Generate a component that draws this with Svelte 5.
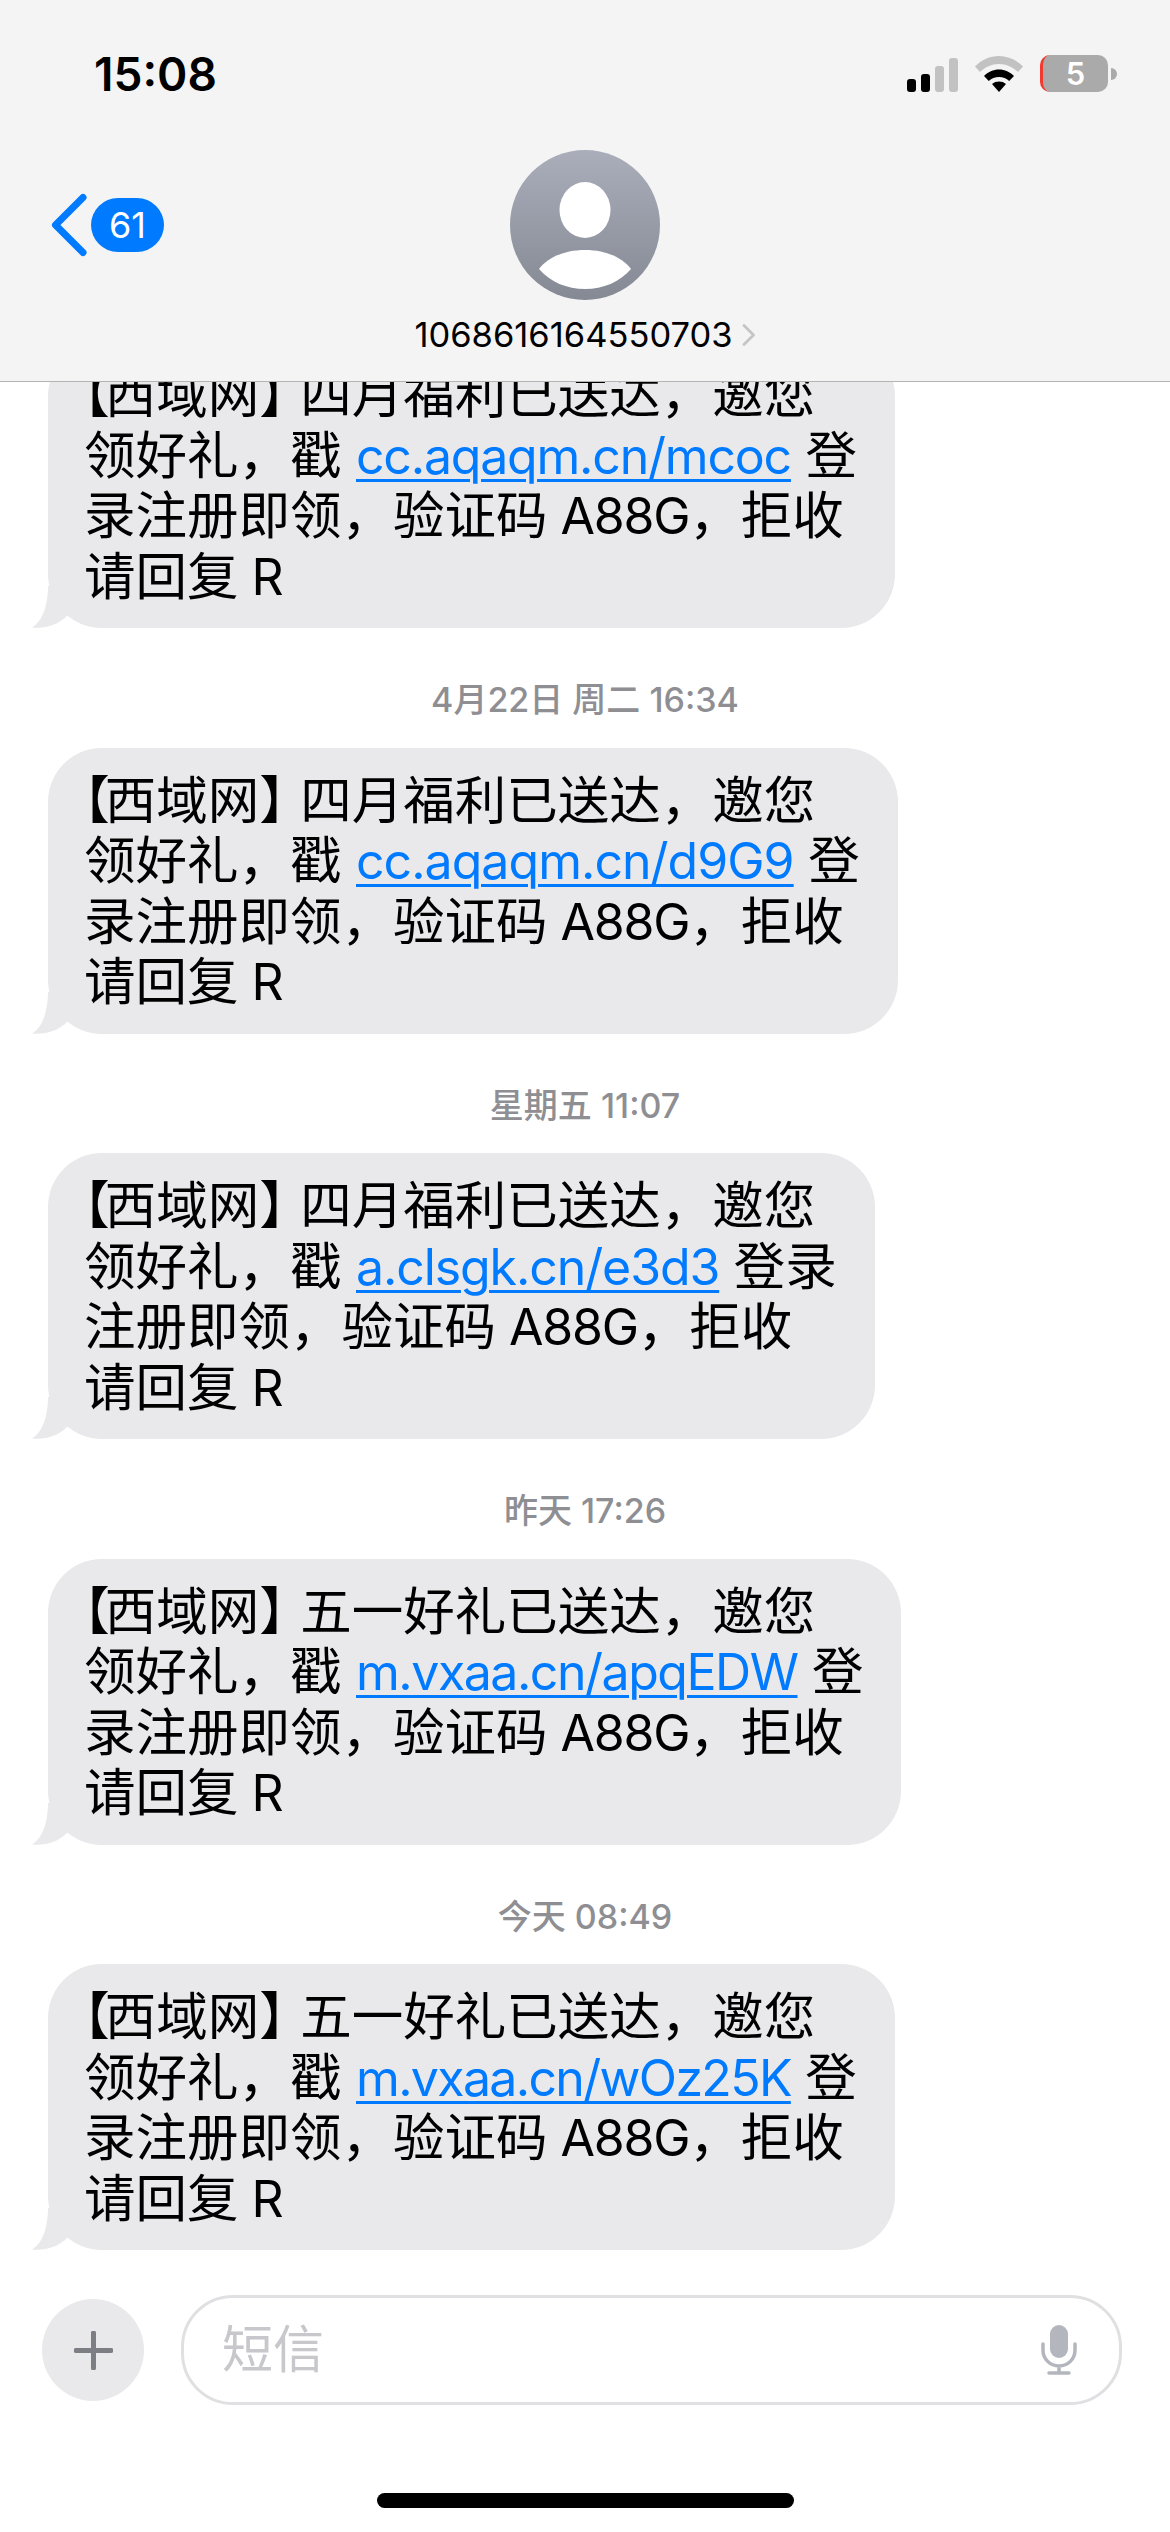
<script>
  const messages = [
    { ts: null, head: '四月福利已送达', link: 'cc.aqaqm.cn/mcoc', track: -1.2, l2: '登', l3: '录注册即领，验证码' },
    { ts: '4月22日 周二 16:34', head: '四月福利已送达', link: 'cc.aqaqm.cn/d9G9', track: -0.97, l2: '登', l3: '录注册即领，验证码' },
    { ts: '星期五 11:07', head: '四月福利已送达', link: 'a.clsgk.cn/e3d3', track: -1.1, l2: '登录', l3: '注册即领，验证码' },
    { ts: '昨天 17:26', head: '五一好礼已送达', link: 'm.vxaa.cn/apqEDW', track: -1.47, l2: '登', l3: '录注册即领，验证码' },
    { ts: '今天 08:49', head: '五一好礼已送达', link: 'm.vxaa.cn/wOz25K', track: -1.67, l2: '登', l3: '录注册即领，验证码' }
  ];
</script>

<div class="screen">
  <header class="top">
    <div class="status">
      <span class="time">15:08</span>
      <div class="indicators">
        <svg class="signal" width="51" height="34" viewBox="0 0 51 34">
          <rect x="0" y="21" width="9" height="13" rx="3" fill="#000" />
          <rect x="14" y="16" width="9" height="18" rx="3" fill="#000" />
          <rect x="28" y="8" width="9" height="26" rx="3" fill="#c2c2c2" />
          <rect x="42" y="0" width="9" height="34" rx="3" fill="#c2c2c2" />
        </svg>
        <svg class="wifi" width="48" height="36" viewBox="0 0 48 36">
          <path d="M0 10.5C6.5 4 14.8 0 24 0s17.500 4 24 10.500l-5 5.500C37.800 11 31.300 8 24 8S10.200 11 5 16z" fill="#c2c2c2" />
          <path d="M9 20C13 16 18.200 13.500 24 13.500S35 16 39 20l-4.800 5C31.500 22.500 28 21 24 21s-7.500 1.500-10.200 4z" fill="#000" />
          <path d="M17 28C19 26.300 21.400 25.500 24 25.500s5 .8 7 2.500l-7 8z" fill="#000" />
        </svg>
        <div class="battery">
          <div class="cell"><span>5</span></div>
          <div class="nub"></div>
        </div>
      </div>
    </div>
    <div class="nav">
      <div class="back">
        <svg width="38" height="64" viewBox="0 0 38 64">
          <path d="M33 4.500 5.500 32 33 59.500" fill="none" stroke="#007aff" stroke-width="7" stroke-linecap="round" stroke-linejoin="round" />
        </svg>
        <span class="badge">61</span>
      </div>
      <div class="contact">
        <svg class="avatar" width="150" height="150" viewBox="0 0 150 150">
          <defs>
            <linearGradient id="av" x1="0" y1="0" x2="0" y2="1">
              <stop offset="0" stop-color="#a9aeba" />
              <stop offset="1" stop-color="#858994" />
            </linearGradient>
          </defs>
          <circle cx="75" cy="75" r="75" fill="url(#av)" />
          <ellipse cx="75" cy="60" rx="25.500" ry="28" fill="#fff" />
          <path d="M29 119C38 107 55 100 75 100s37 7 46 19c-11 13-28 20-46 20s-35-7-46-20z" fill="#fff" />
        </svg>
        <div class="number">
          <span>1068616164550703</span>
          <svg width="14" height="22" viewBox="0 0 14 22">
            <path d="M2 1.500 11.500 11 2 20.500" fill="none" stroke="#c5c5c7" stroke-width="2.800" stroke-linecap="round" stroke-linejoin="round" />
          </svg>
        </div>
      </div>
    </div>
  </header>

  <main class="thread">
    {#each messages as m}
      {#if m.ts}
        <div class="stamp">{m.ts}</div>
      {/if}
      <div class="bubble">
        <svg class="tail" width="50" height="42" viewBox="0 0 50 42">
          <path d="M18 0C18 20 12 36 2 41.500 15 43 28 39 37 30L50 20V0z" fill="#e9e9eb" />
        </svg>
        <div class="line"><span class="open">【</span>西域网<span class="close">】</span>{m.head}，邀您</div>
        <div class="line">领好礼，戳 <span class="link" style="letter-spacing: {m.track}px">{m.link}</span> {m.l2}</div>
        <div class="line">{m.l3}<span class="latin">{' A88G'}</span>，拒收</div>
        <div class="line">请回复<span class="latin">{' R'}</span></div>
      </div>
    {/each}
  </main>

  <div class="composer">
    <div class="plus">
      <svg width="39" height="39" viewBox="0 0 39 39">
        <path d="M19.500 2v35M2 19.500h35" stroke="#7d7e84" stroke-width="5" stroke-linecap="round" />
      </svg>
    </div>
    <div class="field">
      <span class="placeholder">短信</span>
      <svg width="36" height="50" viewBox="0 0 36 50">
        <rect x="9" y="0" width="18" height="33" rx="9" fill="#b3b7bd" />
        <path d="M2 19v6c0 9 7 16 16 16s16-7 16-16v-6M18 41v6M8 48h20" fill="none" stroke="#b3b7bd" stroke-width="3.500" stroke-linecap="round" />
      </svg>
    </div>
  </div>
  <div class="home"></div>
</div>

<style>
  :global(body) {
    margin: 0;
    background: #fff;
  }
  .screen {
    position: relative;
    width: 1170px;
    height: 2532px;
    overflow: hidden;
    display: flex;
    flex-direction: column;
    background: #fff;
    color: #000;
    font-family: Inter, "Noto Sans CJK SC", sans-serif;
  }
  .top {
    position: absolute;
    top: 0;
    left: 0;
    right: 0;
    height: 381px;
    box-sizing: content-box;
    background: #f4f4f4;
    border-bottom: 1px solid #b4b4b4;
    z-index: 2;
  }
  .status {
    height: 150px;
    box-sizing: border-box;
    padding: 55px 53px 0 94px;
    display: flex;
    justify-content: space-between;
    align-items: flex-start;
  }
  .time {
    font-size: 46px;
    font-weight: 600;
    line-height: 38px;
  }
  .indicators {
    display: flex;
    align-items: flex-end;
    gap: 17px;
    height: 37px;
  }
  .signal,
  .wifi {
    display: block;
  }
  .battery {
    display: flex;
    align-items: center;
    gap: 3px;
  }
  .cell {
    width: 68px;
    height: 37px;
    box-sizing: border-box;
    background: #aaaaaa;
    border-left: 3px solid #f23b30;
    border-radius: 10px;
    display: flex;
    align-items: center;
    justify-content: center;
    color: #fff;
    font-size: 31px;
    font-weight: 600;
    line-height: 37px;
  }
  .nub {
    width: 6px;
    height: 12px;
    background: #aaaaaa;
    border-radius: 0 6px 6px 0;
  }
  .nav {
    position: relative;
    display: flex;
    justify-content: center;
  }
  .back {
    position: absolute;
    left: 50px;
    top: 43px;
    display: flex;
    align-items: center;
    gap: 3px;
  }
  .badge {
    width: 73px;
    height: 54px;
    border-radius: 27px;
    background: #007aff;
    color: #fff;
    font-size: 36px;
    line-height: 54px;
    text-align: center;
  }
  .contact {
    display: flex;
    flex-direction: column;
    align-items: center;
  }
  .avatar {
    display: block;
  }
  .number {
    display: flex;
    align-items: center;
    gap: 9px;
    margin-top: 13px;
    font-size: 34.500px;
    line-height: 44px;
    white-space: nowrap;
  }
  .thread {
    flex: 1;
    min-height: 0;
    padding: 342px 0 0 48px;
    font-size: 51.500px;
    line-height: 60.500px;
  }
  .stamp {
    width: 1074px;
    margin: 52px 0 27.600px;
    text-align: center;
    color: #8e8e93;
    font-size: 34px;
    line-height: 40px;
    font-weight: 500;
  }
  .bubble {
    position: relative;
    width: fit-content;
    box-sizing: border-box;
    padding: 22px 38px 22px 36px;
    background: #e9e9eb;
    border-radius: 54px;
  }
  .tail {
    position: absolute;
    left: -18px;
    bottom: 0;
    display: block;
  }
  .line {
    position: relative;
    white-space: pre;
  }
  .open {
    font-feature-settings: "halt";
    letter-spacing: -5px;
  }
  .close {
    letter-spacing: -10.500px;
  }
  .latin,
  .link {
    font-size: 50px;
    line-height: 1;
    letter-spacing: -1.200px;
  }
  .link {
    color: #007aff;
    text-decoration: underline;
    text-decoration-thickness: 3px;
    text-underline-offset: 5px;
  }
  .composer {
    display: flex;
    align-items: center;
    gap: 37px;
    padding: 0 48px 0 42px;
  }
  .plus {
    width: 102px;
    height: 102px;
    flex: none;
    border-radius: 50%;
    background: #e9e9eb;
    display: flex;
    align-items: center;
    justify-content: center;
  }
  .plus svg,
  .field svg {
    display: block;
  }
  .field {
    flex: 1;
    height: 110px;
    box-sizing: border-box;
    border: 3px solid #e0e0e2;
    border-radius: 52px;
    padding: 0 42px 0 38px;
    display: flex;
    align-items: center;
    justify-content: space-between;
  }
  .placeholder {
    color: #c7c7cc;
    font-size: 51px;
    line-height: 60px;
  }
  .home {
    width: 417px;
    height: 15px;
    margin: 88px auto 24px;
    border-radius: 8px;
    background: #000;
  }
</style>
